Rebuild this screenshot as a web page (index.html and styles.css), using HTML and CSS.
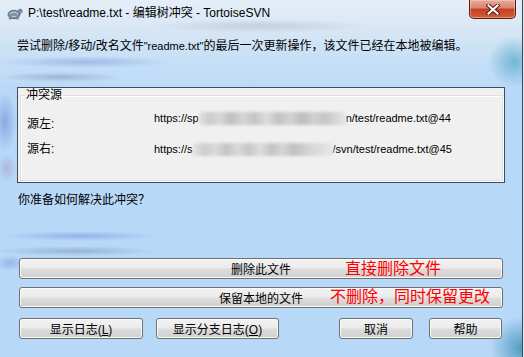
FILE: index.html
```html
<!DOCTYPE html>
<html lang="zh-CN">
<head>
    <meta charset="UTF-8">
    <meta name="viewport" content="width=device-width, initial-scale=1.0">
    <title>编辑树冲突 - TortoiseSVN</title>
    <link rel="stylesheet" href="styles.css">
</head>
<body>
    <div class="window">
        <!-- Title bar -->
        <div class="titlebar">
            <svg class="app-icon" width="16" height="16" viewBox="0 0 16 16">
                <ellipse cx="7" cy="9.5" rx="6" ry="4.2" fill="#7f93ab" stroke="#4c5d72" stroke-width="0.8"/>
                <path d="M3 9 Q7 5 11 9" fill="none" stroke="#c9d4e0" stroke-width="1"/>
                <path d="M5 11.5 L9 11.5" stroke="#c9d4e0" stroke-width="0.8"/>
                <circle cx="13.2" cy="6.2" r="2" fill="#9aaabd" stroke="#4c5d72" stroke-width="0.7"/>
                <circle cx="13.7" cy="5.8" r="0.5" fill="#1d2530"/>
                <ellipse cx="3" cy="13.6" rx="1.4" ry="0.9" fill="#6c8097"/>
                <ellipse cx="10.5" cy="13.6" rx="1.4" ry="0.9" fill="#6c8097"/>
            </svg>
            <span class="title">P:\test\readme.txt - 编辑树冲突 - TortoiseSVN</span>
            <div class="close-btn">
                <svg width="14" height="11" viewBox="0 0 14 11">
                    <path d="M2.5 1.5 L11.5 9.5 M11.5 1.5 L2.5 9.5" stroke="#4a1208" stroke-width="4" stroke-linecap="square"/>
                    <path d="M2.5 1.5 L11.5 9.5 M11.5 1.5 L2.5 9.5" stroke="#ffffff" stroke-width="2.2" stroke-linecap="square"/>
                </svg>
            </div>
        </div>

        <!-- Dialog content -->
        <div class="client">
            <p class="message">尝试删除/移动/改名文件<span class="latin">"readme.txt"</span>的最后一次更新操作，该文件已经在本地被编辑。</p>

            <div class="panel">
                <fieldset class="group">
                    <legend>冲突源</legend>
                    <div class="rows">
                        <span class="label first">源左:</span>
                        <span class="url first">https://sp<span class="mosaic m1"></span>n/test/readme.txt@44</span>
                        <span class="label">源右:</span>
                        <span class="url">https://s<span class="mosaic m2"></span>/svn/test/readme.txt@45</span>
                    </div>
                </fieldset>
            </div>

            <p class="question">你准备如何解决此冲突？</p>

            <div class="choice">
                <button class="btn wide">删除此文件</button>
                <span class="note note-delete">直接删除文件</span>
            </div>
            <div class="choice second">
                <button class="btn wide">保留本地的文件</button>
                <span class="note note-keep">不删除，同时保留更改</span>
            </div>

            <div class="actions">
                <button class="btn log">显示日志(<u>L</u>)</button>
                <button class="btn branch-log">显示分支日志(<u>O</u>)</button>
                <button class="btn cancel">取消</button>
                <button class="btn help">帮助</button>
            </div>
        </div>
    </div>
</body>
</html>
```

FILE: styles.css
```css
* {
    margin: 0;
    padding: 0;
    box-sizing: border-box;
}

body {
    background: #dfeaf4;
    font-family: 'Liberation Sans', 'Noto Sans CJK SC', sans-serif;
    font-size: 12px;
    color: #000;
}

.window {
    width: 523px;
    height: 357px;
    border-right: 1px solid #3d4754;
    overflow: hidden;
    background:
        radial-gradient(ellipse 110px 7px at 260px 26px, rgba(110, 120, 140, 0.22), transparent),
        radial-gradient(circle 26px at 514px 62px, rgba(60, 155, 195, 0.6), transparent),
        radial-gradient(ellipse 85px 6px at 85px 62px, rgba(80, 110, 200, 0.32), transparent),
        radial-gradient(ellipse 60px 5px at 60px 77px, rgba(90, 100, 130, 0.32), transparent),
        radial-gradient(ellipse 12px 30px at 5px 122px, rgba(70, 100, 200, 0.4), transparent),
        radial-gradient(ellipse 10px 15px at 7px 168px, rgba(150, 120, 170, 0.35), transparent),
        radial-gradient(ellipse 80px 5px at 80px 236px, rgba(70, 100, 210, 0.32), transparent),
        radial-gradient(ellipse 80px 5px at 75px 251px, rgba(90, 100, 130, 0.32), transparent),
        radial-gradient(ellipse 15px 8px at 10px 263px, rgba(80, 100, 200, 0.3), transparent),
        radial-gradient(circle 32px at 522px 348px, rgba(45, 135, 175, 0.75), transparent),
        linear-gradient(#e5eef8 0, #d9e7f5 28px, #c6dff6 60px, #b8d8f8 95px);
}

/* Title bar */
.titlebar {
    height: 26px;
    display: flex;
    align-items: center;
    padding-left: 7px;
}

.app-icon {
    flex-shrink: 0;
    margin-right: 5px;
}

.title {
    font-size: 12px;
    line-height: 14px;
    color: #000;
}

.close-btn {
    align-self: flex-start;
    margin-left: auto;
    margin-right: 6px;
    width: 47px;
    height: 19px;
    border: 1px solid #5a1a10;
    border-top: none;
    border-radius: 0 0 5px 5px;
    background: linear-gradient(#e9ab9d 0, #dc8270 45%, #c4401f 50%, #d45c3c 100%);
    box-shadow: inset 0 0 0 1px rgba(255, 220, 210, 0.45);
    display: flex;
    align-items: center;
    justify-content: center;
}

/* Client area */
.client {
    padding: 0 17px;
}

.message {
    margin-top: 13px;
    line-height: 14px;
}

.latin {
    font-size: 11px;
}

.panel {
    margin-top: 34px;
    height: 96px;
    background: #f0f0f0;
    border: 1px solid #3f4c5c;
    padding: 0 1px 0 2px;
}

.group {
    border: 1px solid #dcdfe3;
    box-shadow: 1px 1px 0 #ffffff, inset 1px 1px 0 #ffffff;
    padding: 0 6px 23px 6px;
    height: 93px;
}

.group legend {
    line-height: 14px;
    padding: 0 1px;
    margin-left: -2px;
}

.rows {
    display: grid;
    grid-template-columns: 127px auto;
    grid-template-rows: 20px 14px;
    row-gap: 11px;
    margin-top: 9px;
    line-height: 14px;
}

.label.first {
    align-self: end;
}

.url {
    font-size: 11px;
    display: flex;
    align-items: center;
    height: 14px;
    white-space: nowrap;
}

.url.first {
    align-self: start;
}

.mosaic {
    display: inline-block;
    height: 13px;
    filter: blur(1.4px);
}

.m1 {
    width: 147px;
    background: linear-gradient(90deg,
        #e2e2e2 0, #cbcbcb 7%, #d8d8d8 14%, #bfbfbf 22%, #d6d6d6 30%, #c4c4c4 38%,
        #dcdcdc 46%, #c2c2c2 54%, #d3d3d3 62%, #bdbdbd 70%, #d0d0d0 78%, #c6c6c6 86%, #e6e6e6 100%);
}

.m2 {
    width: 140px;
    background: linear-gradient(90deg,
        #e4e4e4 0, #cdcdcd 8%, #dadada 16%, #c3c3c3 24%, #d9d9d9 32%, #c6c6c6 40%,
        #dedede 48%, #c4c4c4 56%, #d5d5d5 64%, #c0c0c0 72%, #d3d3d3 82%, #e8e8e8 100%);
}

.question {
    margin-top: 10px;
    margin-left: 1px;
    line-height: 14px;
}

/* Buttons */
.btn {
    height: 21px;
    font-family: 'Liberation Sans', 'Noto Sans CJK SC', sans-serif;
    font-size: 12px;
    color: #000;
    border: 1px solid #707070;
    border-radius: 3px;
    background: linear-gradient(#f2f2f2 0, #ebebeb 48%, #dddddd 52%, #cfcfcf 100%);
    box-shadow: inset 0 0 0 1px #fbfbfb;
    cursor: pointer;
}

.btn u {
    text-decoration: underline;
}

.choice {
    position: relative;
    margin: 51px 2px 0 2px;
}

.choice.second {
    margin-top: 8px;
}

.btn.wide {
    width: 100%;
    display: block;
}

.note {
    position: absolute;
    font-family: 'Noto Sans CJK SC', sans-serif;
    font-size: 16px;
    line-height: 16px;
    color: #ff0000;
    pointer-events: none;
}

.note-delete {
    left: 326px;
    top: 1px;
}

.note-keep {
    left: 311px;
    top: 0;
}

.actions {
    display: flex;
    margin: 10px 3px 0 2px;
}

.log {
    width: 124px;
}

.branch-log {
    width: 123px;
    margin-left: 13px;
}

.cancel {
    width: 74px;
    margin-left: auto;
}

.help {
    width: 73px;
    margin-left: 16px;
}
```
